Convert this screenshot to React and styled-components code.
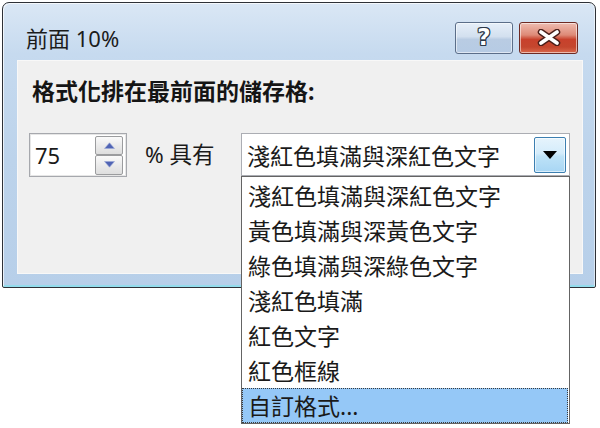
import React from 'react';
import styled, { createGlobalStyle } from 'styled-components';

const Global = createGlobalStyle`
  html, body { margin: 0; padding: 0; background: #ffffff; }
  body {
    font-family: "Noto Sans", "Noto Sans CJK TC", sans-serif;
    color: #1e1e1e;
  }
`;

const CJK = `"Noto Sans", "Noto Sans CJK TC", sans-serif`;

const Stage = styled.div`
  width: 600px;
  height: 428px;
  padding: 2px;
  box-sizing: border-box;
`;

const Window = styled.div`
  width: 594px;
  height: 286px;
  box-sizing: border-box;
  border: 1px solid #2e3137;
  border-radius: 7px 7px 2px 2px;
  background: linear-gradient(180deg, #dae7f5 0%, #c6daef 18%, #bcd3eb 55%, #b7cfe9 100%);
  box-shadow: inset 1px 1px 0 rgba(255, 255, 255, 0.7), inset -1px 0 0 rgba(255, 255, 255, 0.5),
    inset 0 -2px 0 #93dcec;
  display: flex;
  flex-direction: column;
  padding: 0 12px 13px 14px;
`;

const TitleBar = styled.div`
  height: 57px;
  box-sizing: border-box;
  padding: 12px 5px 0 9px;
  display: flex;
  align-items: center;
`;

const Title = styled.div`
  flex: 1;
  font-family: ${CJK};
  font-size: 22px;
  line-height: 30px;
  color: #1c1c1c;
`;

const CaptionButton = styled.div`
  width: ${p => p.$w}px;
  height: 32px;
  box-sizing: border-box;
  margin-left: ${p => p.$gap}px;
  border-radius: 3px;
  display: flex;
  align-items: center;
  justify-content: center;
  border: 1px solid ${p => (p.$red ? '#6e2a23' : '#5b6e89')};
  background: ${p =>
    p.$red
      ? 'linear-gradient(180deg, #eebcb1 0%, #de8a77 40%, #c8412c 55%, #c4462e 80%, #d9694c 100%)'
      : 'linear-gradient(180deg, #e6eff9 0%, #d3e0ef 45%, #b9cce3 55%, #b6cbe4 100%)'};
  box-shadow: inset 0 0 0 1px rgba(255, 255, 255, 0.55);
`;

const HelpGlyph = styled.span`
  font-family: "DejaVu Sans", sans-serif;
  font-weight: bold;
  font-size: 23px;
  line-height: 23px;
  color: #ffffff;
  text-shadow: -1px 0 #2d3848, 1px 0 #2d3848, 0 -1px #2d3848, 0 1px #2d3848,
    1px 1px #2d3848, -1px -1px #2d3848, 1px -1px #2d3848, -1px 1px #2d3848;
`;

const Client = styled.div`
  flex: 1;
  background: #f0f0f0;
  box-shadow: inset 0 0 0 1px #f8f8f8;
  padding: 17px 13px 0 12px;
  display: flex;
  flex-direction: column;
`;

const Heading = styled.div`
  font-family: ${CJK};
  font-weight: bold;
  font-size: 23px;
  line-height: 28px;
  padding-left: 3px;
  color: #151515;
`;

const Row = styled.div`
  margin-top: 28px;
  display: flex;
  align-items: flex-start;
`;

const SpinBox = styled.div`
  width: 98px;
  height: 44px;
  box-sizing: border-box;
  border: 1px solid #a6a8ad;
  box-shadow: inset 0 0 0 1px #e6e6e6;
  background: #ffffff;
  display: flex;
  align-items: center;
  justify-content: space-between;
  padding: 0 3px 0 5px;
`;

const SpinValue = styled.span`
  font-family: ${CJK};
  font-size: 22px;
  color: #1a1a1a;
`;

const SpinButtons = styled.div`
  width: 28px;
  height: 39px;
  display: flex;
  flex-direction: column;
`;

const SpinButton = styled.div`
  flex: 1;
  box-sizing: border-box;
  border: 1px solid #9b9c9e;
  border-radius: 2px;
  background: linear-gradient(180deg, #fafafa 0%, #ebebeb 50%, #dedede 100%);
  display: flex;
  align-items: center;
  justify-content: center;
`;

const InlineLabel = styled.span`
  font-family: ${CJK};
  font-size: 22.5px;
  line-height: 44px;
  margin-left: 18px;
  color: #1a1a1a;
`;

const Combo = styled.div`
  position: relative;
  margin-left: auto;
  width: 329px;
  height: 43px;
  box-sizing: border-box;
  border: 1px solid #abadb3;
  background: #ffffff;
  display: flex;
  align-items: center;
  padding: 0 3px 0 5px;
`;

const ComboText = styled.span`
  flex: 1;
  font-family: ${CJK};
  font-size: 23px;
  color: #1a1a1a;
  white-space: nowrap;
`;

const DropButton = styled.div`
  width: 32px;
  height: 36px;
  box-sizing: border-box;
  border: 1px solid #3c7fb1;
  border-radius: 2px;
  background: linear-gradient(180deg, #e6f4fc 0%, #d4ecfb 45%, #bde2f7 55%, #a8d6f4 100%);
  box-shadow: inset 0 0 0 1px rgba(255, 255, 255, 0.6);
  display: flex;
  align-items: center;
  justify-content: center;
`;

const DropList = styled.div`
  position: absolute;
  left: -1px;
  top: calc(100% + 1px);
  width: 329px;
  box-sizing: border-box;
  border: 1px solid #646464;
  background: #ffffff;
  display: flex;
  flex-direction: column;
  padding: 1px 1px 0 0;
`;

const Option = styled.div`
  height: 35px;
  box-sizing: border-box;
  padding: 2px 0 0 5px;
  font-family: ${CJK};
  font-size: 23px;
  line-height: 31px;
  color: #1a1a1a;
  white-space: nowrap;
  border: 1px ${p => (p.$active ? 'dotted #3a3a3a' : 'solid transparent')};
  background: ${p => (p.$active ? '#95c8f7' : 'transparent')};
`;

const options = [
  '淺紅色填滿與深紅色文字',
  '黃色填滿與深黃色文字',
  '綠色填滿與深綠色文字',
  '淺紅色填滿',
  '紅色文字',
  '紅色框線',
  '自訂格式...',
];

const Arrow = ({ up }) => (
  <svg width="11" height="7" viewBox="0 0 11 7">
    <path
      d={up ? 'M0.5 6.5 L5.5 0.8 L10.5 6.5 Z' : 'M0.5 0.5 L5.5 6.2 L10.5 0.5 Z'}
      fill="#5064b4"
      stroke="#9aa8d8"
      strokeWidth="0.6"
    />
  </svg>
);

export default function App() {
  return (
    <>
      <Global />
      <Stage>
        <Window>
          <TitleBar>
            <Title>前面 10%</Title>
            <CaptionButton $w={58} $gap={0}>
              <HelpGlyph>?</HelpGlyph>
            </CaptionButton>
            <CaptionButton $w={59} $gap={6} $red>
              <svg width="24" height="17" viewBox="0 0 24 17">
                <path d="M4 3 L20 14 M20 3 L4 14" stroke="#4a1e19" strokeWidth="6.5" strokeLinecap="round" />
                <path d="M4 3 L20 14 M20 3 L4 14" stroke="#ffffff" strokeWidth="3.8" strokeLinecap="round" />
              </svg>
            </CaptionButton>
          </TitleBar>
          <Client>
            <Heading>格式化排在最前面的儲存格:</Heading>
            <Row>
              <SpinBox>
                <SpinValue>75</SpinValue>
                <SpinButtons>
                  <SpinButton>
                    <Arrow up />
                  </SpinButton>
                  <SpinButton>
                    <Arrow />
                  </SpinButton>
                </SpinButtons>
              </SpinBox>
              <InlineLabel>% 具有</InlineLabel>
              <Combo>
                <ComboText>淺紅色填滿與深紅色文字</ComboText>
                <DropButton>
                  <svg width="14" height="8" viewBox="0 0 14 8">
                    <path d="M0 0 L14 0 L7 8 Z" fill="#000000" />
                  </svg>
                </DropButton>
                <DropList>
                  {options.map((o, i) => (
                    <Option key={o} $active={i === options.length - 1}>
                      {o}
                    </Option>
                  ))}
                </DropList>
              </Combo>
            </Row>
          </Client>
        </Window>
      </Stage>
    </>
  );
}
